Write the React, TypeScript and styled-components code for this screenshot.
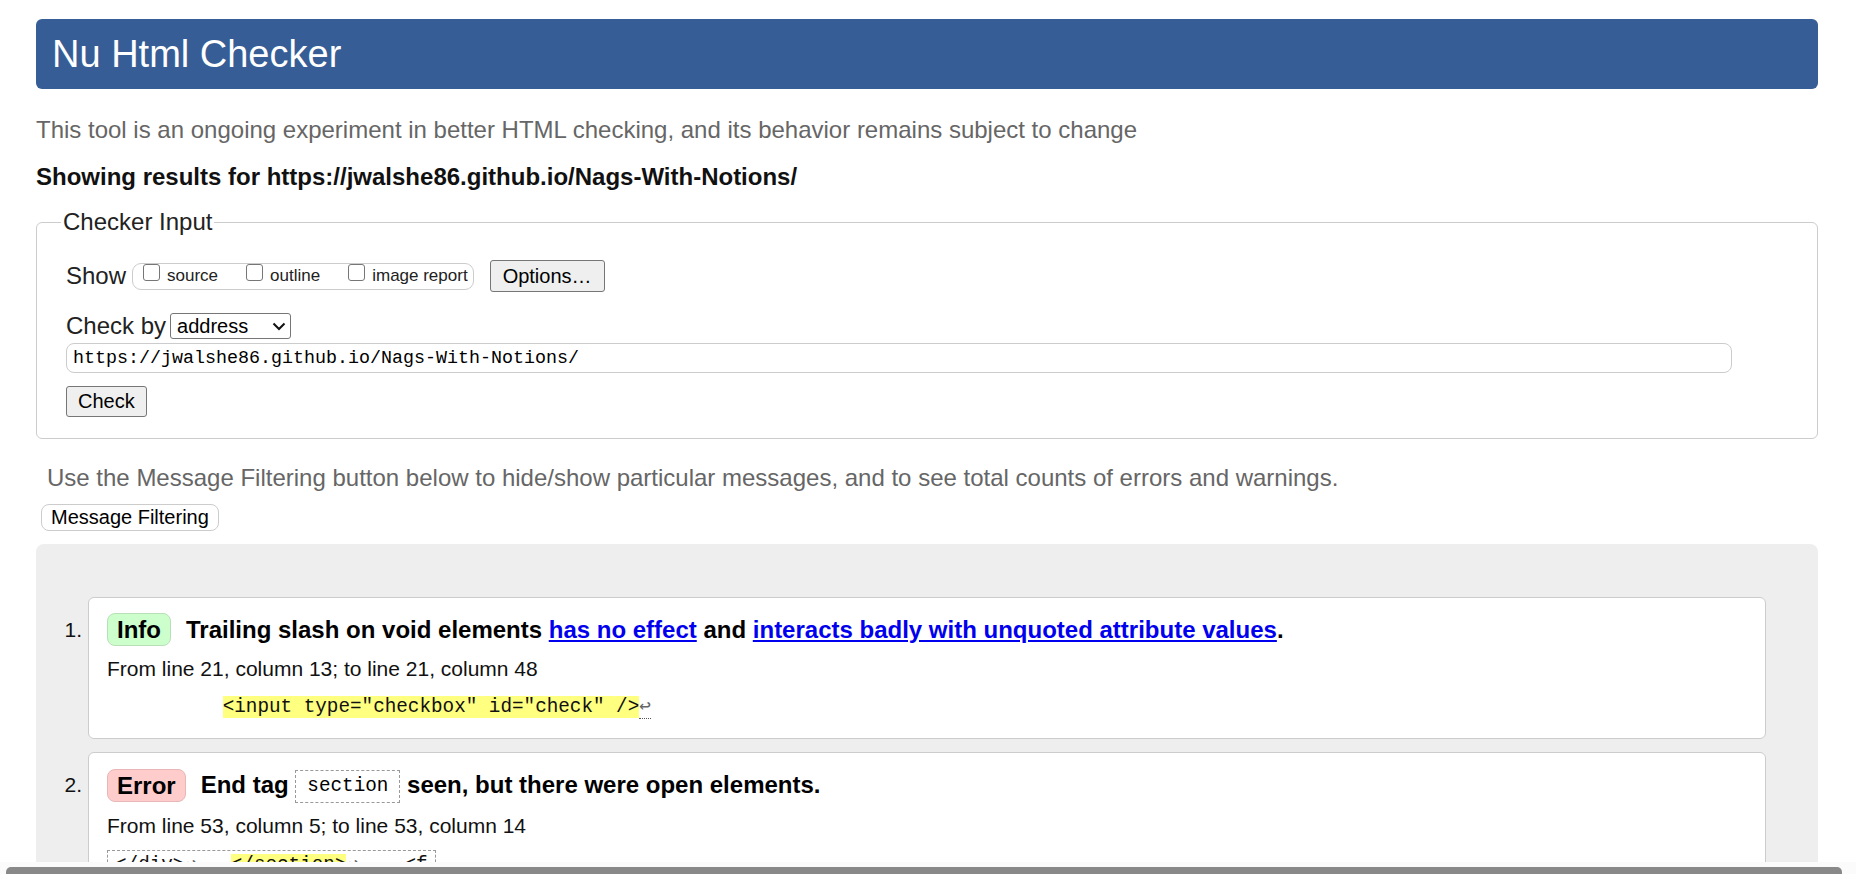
import React from "react";
import styled, { createGlobalStyle } from "styled-components";

const GlobalStyle = createGlobalStyle`
  html, body {
    margin: 0;
    padding: 0;
    overflow: hidden;
    background: #fff;
  }
  body {
    font-family: "Liberation Sans", Arial, sans-serif;
    color: #000;
  }
`;

const Page = styled.div`
  padding: 19px 38px 0 36px;
`;

const Header = styled.h1`
  margin: 0;
  height: 70px;
  line-height: 70px;
  padding: 0 16px;
  background: #365d95;
  color: #fff;
  border-radius: 6px;
  font-size: 38px;
  font-weight: normal;
`;

const Note = styled.p<{ $top: number; $indent?: number }>`
  margin: ${(p) => p.$top}px 0 0;
  padding-left: ${(p) => p.$indent ?? 0}px;
  font-size: 24px;
  line-height: 28px;
  color: #666;
`;

const ResultsFor = styled.p`
  margin: 19px 0 0;
  font-size: 24px;
  line-height: 28px;
  font-weight: bold;
  color: #111;
`;

const InputSet = styled.fieldset`
  margin: 17px 0 0;
  padding: 24px 85px 21px 29px;
  border: 1px solid #ccc;
  border-radius: 6px;
  min-width: 0;
`;

const Legend = styled.legend`
  margin-left: -5px;
  padding: 0 2px;
  font-size: 24px;
  line-height: 28px;
  color: #222;
`;

const Stack = styled.div`
  display: flex;
  flex-direction: column;
  align-items: flex-start;
`;

const Row = styled.div<{ $top?: number; $h: number }>`
  display: flex;
  align-items: center;
  height: ${(p) => p.$h}px;
  margin-top: ${(p) => p.$top ?? 0}px;
`;

const Label = styled.span`
  font-size: 24px;
  line-height: 28px;
  color: #222;
`;

const Toggles = styled.div`
  display: flex;
  align-items: flex-start;
  box-sizing: border-box;
  height: 27px;
  margin-left: 6px;
  padding: 0 5px 0 10px;
  border: 1px solid #ccc;
  border-radius: 9px;
`;

const Toggle = styled.label`
  display: flex;
  align-items: flex-start;
  margin-right: 28px;

  &:last-child {
    margin-right: 0;
  }
`;

const Box = styled.span`
  display: block;
  width: 17px;
  height: 17px;
  box-sizing: border-box;
  border: 1px solid #767676;
  border-radius: 3px;
  background: #fff;
`;

const ToggleText = styled.span`
  margin: 2px 0 0 7px;
  font-size: 17px;
  line-height: 20px;
  color: #222;
`;

const Button = styled.button<{ $h: number; $pad: number; $flat?: boolean; $left?: number; $top?: number }>`
  height: ${(p) => p.$h}px;
  padding: 0 ${(p) => p.$pad}px;
  margin: ${(p) => p.$top ?? 0}px 0 0 ${(p) => p.$left ?? 0}px;
  font-family: "Liberation Sans", Arial, sans-serif;
  font-size: 20px;
  color: #000;
  background: ${(p) => (p.$flat ? "#fff" : "#efefef")};
  border: 1px solid ${(p) => (p.$flat ? "#ccc" : "#767676")};
  border-radius: ${(p) => (p.$flat ? 8 : 3)}px;
  cursor: pointer;
`;

const Select = styled.div`
  display: flex;
  align-items: center;
  justify-content: space-between;
  box-sizing: border-box;
  width: 121px;
  height: 26px;
  margin-left: 4px;
  padding: 0 4px 0 6px;
  border: 1px solid #767676;
  border-radius: 3px;
  font-size: 20px;
  color: #000;
`;

const UrlField = styled.input`
  display: block;
  box-sizing: border-box;
  width: 100%;
  height: 30px;
  margin-top: 3px;
  padding: 0 6px;
  border: 1px solid #ccc;
  border-radius: 8px;
  font-family: "Liberation Mono", monospace;
  font-size: 18.33px;
  color: #000;
  outline: none;
`;

const Results = styled.div`
  margin-top: 13px;
  padding: 53px 52px 60px 0;
  background: #eee;
  border-radius: 8px;
`;

const List = styled.ol`
  list-style: none;
  margin: 0;
  padding: 0;
  display: flex;
  flex-direction: column;
  gap: 13px;
`;

const Item = styled.li`
  display: flex;
  align-items: flex-start;
`;

const Num = styled.span`
  flex: 0 0 46px;
  margin-right: 6px;
  padding-top: 16px;
  text-align: right;
  font-size: 21px;
  line-height: 33px;
  color: #111;
`;

const Message = styled.div`
  flex: 1;
  min-width: 0;
  padding: 15px 18px 18px;
  background: #fff;
  border: 1px solid #ccc;
  border-radius: 6px;
`;

const Headline = styled.div`
  display: flex;
  align-items: center;
`;

const Badge = styled.span<{ $kind: "info" | "error" }>`
  flex: none;
  height: 33px;
  box-sizing: border-box;
  margin-right: 15px;
  padding: 0 9px;
  line-height: 31px;
  font-size: 24px;
  font-weight: bold;
  border-radius: 8px;
  border: 1px solid ${(p) => (p.$kind === "info" ? "#b8e0b8" : "#e8b6b6")};
  background: ${(p) => (p.$kind === "info" ? "#ccffcc" : "#ffcccc")};
`;

const Title = styled.span`
  font-size: 24px;
  line-height: 33px;
  font-weight: bold;
  color: #000;
`;

const Link = styled.a`
  color: #0000ee;
  text-decoration: underline;
`;

const InlineCode = styled.code`
  display: inline-block;
  padding: 0 11px;
  border: 1px dashed #999;
  font-family: "Liberation Mono", monospace;
  font-size: 19.3px;
  line-height: 31px;
  font-weight: normal;
  vertical-align: middle;
`;

const Location = styled.p`
  margin: 11px 0 0;
  font-size: 21px;
  line-height: 24px;
  color: #111;
`;

const Extract = styled.p<{ $boxed?: boolean; $top: number }>`
  display: ${(p) => (p.$boxed ? "inline-block" : "block")};
  margin: ${(p) => p.$top}px 0 0;
  padding: ${(p) => (p.$boxed ? "2px 7px" : "0")};
  border: ${(p) => (p.$boxed ? "1px dashed #999" : "none")};
  font-family: "Liberation Mono", "DejaVu Sans Mono", monospace;
  font-size: 19.3px;
  line-height: 25px;
  white-space: pre;
  color: #111;
`;

const Mark = styled.mark`
  background: #ffff80;
  color: #111;
`;

const LineEnd = styled.span`
  color: #666;
  border-bottom: 1px dotted #555;
`;

const ScrollTrack = styled.div`
  position: fixed;
  left: 0;
  right: 0;
  bottom: 0;
  height: 12px;
  overflow: hidden;
  background: #fbfbfb;
`;

const ScrollThumb = styled.div`
  height: 12px;
  margin: 5px 14px 0 6px;
  border-radius: 5px;
  background: #898989;
`;

function Chevron() {
  return (
    <svg width="14" height="9" viewBox="0 0 14 9">
      <polyline points="1.5,1.5 7,7 12.5,1.5" fill="none" stroke="#111" strokeWidth="2" />
    </svg>
  );
}

export default function App() {
  const url = "https://jwalshe86.github.io/Nags-With-Notions/";
  return (
    <>
      <GlobalStyle />
      <Page>
        <Header>Nu Html Checker</Header>
        <Note $top={27}>
          This tool is an ongoing experiment in better HTML checking, and its behavior remains subject to change
        </Note>
        <ResultsFor>Showing results for {url}</ResultsFor>

        <InputSet>
          <Legend>Checker Input</Legend>
          <Stack>
            <Row $h={32}>
              <Label>Show</Label>
              <Toggles>
                {["source", "outline", "image report"].map((name) => (
                  <Toggle key={name}>
                    <Box />
                    <ToggleText>{name}</ToggleText>
                  </Toggle>
                ))}
              </Toggles>
              <Button $h={32} $pad={12} $left={16}>Options…</Button>
            </Row>
            <Row $h={28} $top={20}>
              <Label>Check by</Label>
              <Select>
                <span>address</span>
                <Chevron />
              </Select>
            </Row>
            <UrlField readOnly value={url} />
            <Button $h={31} $pad={11} $top={13}>Check</Button>
          </Stack>
        </InputSet>

        <Note $top={25} $indent={11}>
          Use the Message Filtering button below to hide/show particular messages, and to see total counts of errors and warnings.
        </Note>
        <Button $h={27} $pad={9} $flat $left={5} $top={12}>Message Filtering</Button>

        <Results>
          <List>
            <Item>
              <Num>1.</Num>
              <Message>
                <Headline>
                  <Badge $kind="info">Info</Badge>
                  <Title>
                    Trailing slash on void elements <Link href="#">has no effect</Link> and{" "}
                    <Link href="#">interacts badly with unquoted attribute values</Link>.
                  </Title>
                </Headline>
                <Location>From line 21, column 13; to line 21, column 48</Location>
                <Extract $top={14}>
                  {"          "}
                  <Mark>{'<input type="checkbox" id="check" />'}</Mark>
                  <LineEnd>↩</LineEnd>
                </Extract>
              </Message>
            </Item>
            <Item>
              <Num>2.</Num>
              <Message>
                <Headline>
                  <Badge $kind="error">Error</Badge>
                  <Title>
                    End tag <InlineCode>section</InlineCode> seen, but there were open elements.
                  </Title>
                </Headline>
                <Location>From line 53, column 5; to line 53, column 14</Location>
                <Extract $boxed $top={12}>
                  {"</div>"}
                  <LineEnd>↩</LineEnd>
                  {"   "}
                  <Mark>{"</section>"}</Mark>
                  <LineEnd>↩</LineEnd>
                  {"    <f"}
                </Extract>
              </Message>
            </Item>
          </List>
        </Results>
      </Page>
      <ScrollTrack>
        <ScrollThumb />
      </ScrollTrack>
    </>
  );
}
